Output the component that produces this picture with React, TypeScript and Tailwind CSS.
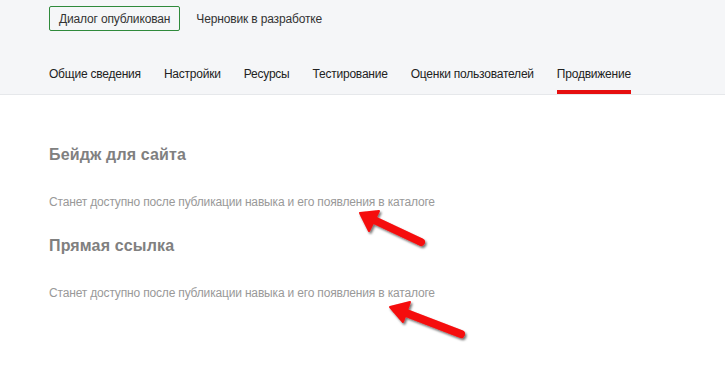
import React from 'react';

const TABS = ['Общие сведения', 'Настройки', 'Ресурсы', 'Тестирование', 'Оценки пользователей', 'Продвижение'];
const ACTIVE = 'Продвижение';

const NOTE = 'Станет доступно после публикации навыка и его появления в каталоге';

function Arrows() {
  return (
    <svg className="absolute inset-0 pointer-events-none" width="725" height="381" viewBox="0 0 725 381">
      <defs>
        <filter id="sh" x="-20%" y="-20%" width="140%" height="140%">
          <feDropShadow dx="1.5" dy="2" stdDeviation="1.2" floodColor="#000" floodOpacity="0.55" />
        </filter>
      </defs>
      <g filter="url(#sh)" fill="#f50a0a" stroke="#f50a0a" strokeLinejoin="round">
        <line x1="372" y1="219" x2="421" y2="242" strokeWidth="8" strokeLinecap="round" />
        <polygon points="360,213 379,211 369,231" strokeWidth="2" />
        <line x1="401" y1="311" x2="461" y2="334" strokeWidth="8" strokeLinecap="round" />
        <polygon points="390,307 410,302 403,322" strokeWidth="2" />
      </g>
    </svg>
  );
}

export default function App() {
  return (
    <div className="relative w-[725px] h-[381px] bg-white overflow-hidden font-['Liberation_Sans',Arial,sans-serif]">
      <div className="bg-[#f5f6f8] border-b border-[#e6e8eb] px-[49px]">
        <div className="flex items-center gap-[16px] pt-[6px] h-[31px]">
          <span className="h-[25px] px-[9px] flex items-center border border-[#2f8a3b] rounded-[2px] text-[12px] tracking-[-0.15px] text-[#333]">
            Диалог опубликован
          </span>
          <span className="text-[12px] tracking-[-0.15px] text-[#333]">Черновик в разработке</span>
        </div>
        <div className="flex gap-[23px] mt-[32px]">
          {TABS.map((t) => (
            <div
              key={t}
              className={`h-[31px] text-[12px] tracking-[-0.22px] text-[#222] pt-[2px] border-b-[4px] ${
                t === ACTIVE ? 'border-[#e60f0f]' : 'border-transparent'
              }`}
            >
              {t}
            </div>
          ))}
        </div>
      </div>

      <div className="px-[49px] pt-[50px]">
        <h2 className="text-[16px] tracking-[0.15px] font-bold text-[#808080] leading-[20px]">Бейдж для сайта</h2>
        <p className="mt-[29px] text-[12px] tracking-[-0.17px] text-[#999] leading-[16px]">{NOTE}</p>
        <h2 className="mt-[26px] text-[16px] tracking-[0.15px] font-bold text-[#808080] leading-[20px]">Прямая ссылка</h2>
        <p className="mt-[29px] text-[12px] tracking-[-0.17px] text-[#999] leading-[16px]">{NOTE}</p>
      </div>

      <Arrows />
    </div>
  );
}
